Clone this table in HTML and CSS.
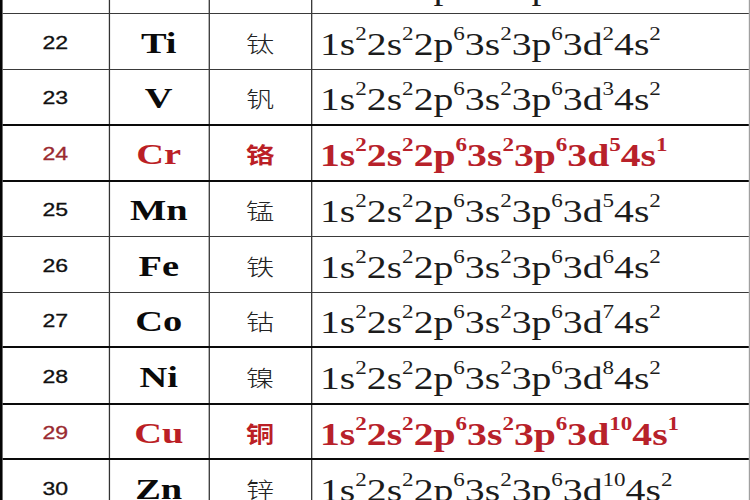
FILE: index.html
```html
<!DOCTYPE html>
<html lang="zh">
<head>
<meta charset="utf-8">
<title>电子排布</title>
<link rel="stylesheet" href="styles.css">
</head>
<body>
<div class="sheet">
  <div class="row thin">
    <div class="num">21</div><div class="sym">Sc</div><div class="cn">钪</div>
    <div class="cfg"><span>1s<sup>2</sup>2s<sup>2</sup>2p<sup>6</sup>3s<sup>2</sup>3p<sup>6</sup>3d<sup>1</sup>4s<sup>2</sup></span></div>
  </div>
  <div class="row thin">
    <div class="num">22</div><div class="sym">Ti</div><div class="cn">钛</div>
    <div class="cfg"><span>1s<sup>2</sup>2s<sup>2</sup>2p<sup>6</sup>3s<sup>2</sup>3p<sup>6</sup>3d<sup>2</sup>4s<sup>2</sup></span></div>
  </div>
  <div class="row thick">
    <div class="num">23</div><div class="sym">V</div><div class="cn">钒</div>
    <div class="cfg"><span>1s<sup>2</sup>2s<sup>2</sup>2p<sup>6</sup>3s<sup>2</sup>3p<sup>6</sup>3d<sup>3</sup>4s<sup>2</sup></span></div>
  </div>
  <div class="row thick red">
    <div class="num">24</div><div class="sym">Cr</div><div class="cn">铬</div>
    <div class="cfg"><span>1s<sup>2</sup>2s<sup>2</sup>2p<sup>6</sup>3s<sup>2</sup>3p<sup>6</sup>3d<sup>5</sup>4s<sup>1</sup></span></div>
  </div>
  <div class="row thin h55">
    <div class="num">25</div><div class="sym">Mn</div><div class="cn">锰</div>
    <div class="cfg"><span>1s<sup>2</sup>2s<sup>2</sup>2p<sup>6</sup>3s<sup>2</sup>3p<sup>6</sup>3d<sup>5</sup>4s<sup>2</sup></span></div>
  </div>
  <div class="row thin">
    <div class="num">26</div><div class="sym">Fe</div><div class="cn">铁</div>
    <div class="cfg"><span>1s<sup>2</sup>2s<sup>2</sup>2p<sup>6</sup>3s<sup>2</sup>3p<sup>6</sup>3d<sup>6</sup>4s<sup>2</sup></span></div>
  </div>
  <div class="row thick h55">
    <div class="num">27</div><div class="sym">Co</div><div class="cn">钴</div>
    <div class="cfg"><span>1s<sup>2</sup>2s<sup>2</sup>2p<sup>6</sup>3s<sup>2</sup>3p<sup>6</sup>3d<sup>7</sup>4s<sup>2</sup></span></div>
  </div>
  <div class="row thick h57">
    <div class="num">28</div><div class="sym">Ni</div><div class="cn">镍</div>
    <div class="cfg"><span>1s<sup>2</sup>2s<sup>2</sup>2p<sup>6</sup>3s<sup>2</sup>3p<sup>6</sup>3d<sup>8</sup>4s<sup>2</sup></span></div>
  </div>
  <div class="row thick red h55">
    <div class="num">29</div><div class="sym">Cu</div><div class="cn">铜</div>
    <div class="cfg"><span>1s<sup>2</sup>2s<sup>2</sup>2p<sup>6</sup>3s<sup>2</sup>3p<sup>6</sup>3d<sup>10</sup>4s<sup>1</sup></span></div>
  </div>
  <div class="row thin">
    <div class="num">30</div><div class="sym">Zn</div><div class="cn">锌</div>
    <div class="cfg"><span>1s<sup>2</sup>2s<sup>2</sup>2p<sup>6</sup>3s<sup>2</sup>3p<sup>6</sup>3d<sup>10</sup>4s<sup>2</sup></span></div>
  </div>
</div>
</body>
</html>
```

FILE: styles.css
```css
html, body {
  margin: 0;
  padding: 0;
  background: #ffffff;
  overflow: hidden;
  width: 750px;
  height: 500px;
}

.sheet {
  width: 586px;
  margin-top: -42px;
  box-sizing: border-box;
  border-left: 2.5px solid #050505;
  border-right: 1.5px solid #a0a0a0;
  transform: scaleX(1.28);
  transform-origin: 0 0;
  color: #161616;
}

.row {
  display: grid;
  grid-template-columns: 83.5px 78px 80.5px 1fr;
  height: 56px;
  box-sizing: border-box;
}

.row.h55 { height: 55px; }
.row.h57 { height: 57px; }

.row.thin { border-bottom: 1.5px solid #3a3a3a; }
.row.thick { border-bottom: 2px solid #0a0a0a; }

.row > div {
  display: flex;
  align-items: center;
  box-sizing: border-box;
}

.num, .sym, .cn {
  justify-content: center;
  border-right: 1.5px solid #333333;
}

.num {
  font-family: "Liberation Sans", Arial, sans-serif;
  font-size: 18px;
  color: #111111;
  padding-top: 3px;
  -webkit-text-stroke: 0.3px #111111;
}

.sym {
  font-family: "Liberation Serif", "Times New Roman", serif;
  font-weight: 700;
  font-size: 30px;
  color: #0a0a0a;
  padding-top: 2px;
}

.cn {
  font-family: "Noto Sans CJK SC", sans-serif;
  font-weight: 300;
  font-size: 22px;
  color: #222222;
}

.cfg {
  font-family: "Liberation Serif", "Times New Roman", serif;
  font-size: 31px;
  color: #1c1c1c;
  padding-left: 6px;
  padding-top: 6px;
  white-space: nowrap;
}

.cfg sup {
  font-size: 18px;
  line-height: 0;
  vertical-align: 15px;
}

.red .num { color: #9a2a30; -webkit-text-stroke: 0.3px #9a2a30; }
.red .sym { color: #bb1f26; }
.red .cn { color: #bb1f26; font-weight: 700; }
.red .cfg { color: #b8212a; font-weight: 700; }
```
